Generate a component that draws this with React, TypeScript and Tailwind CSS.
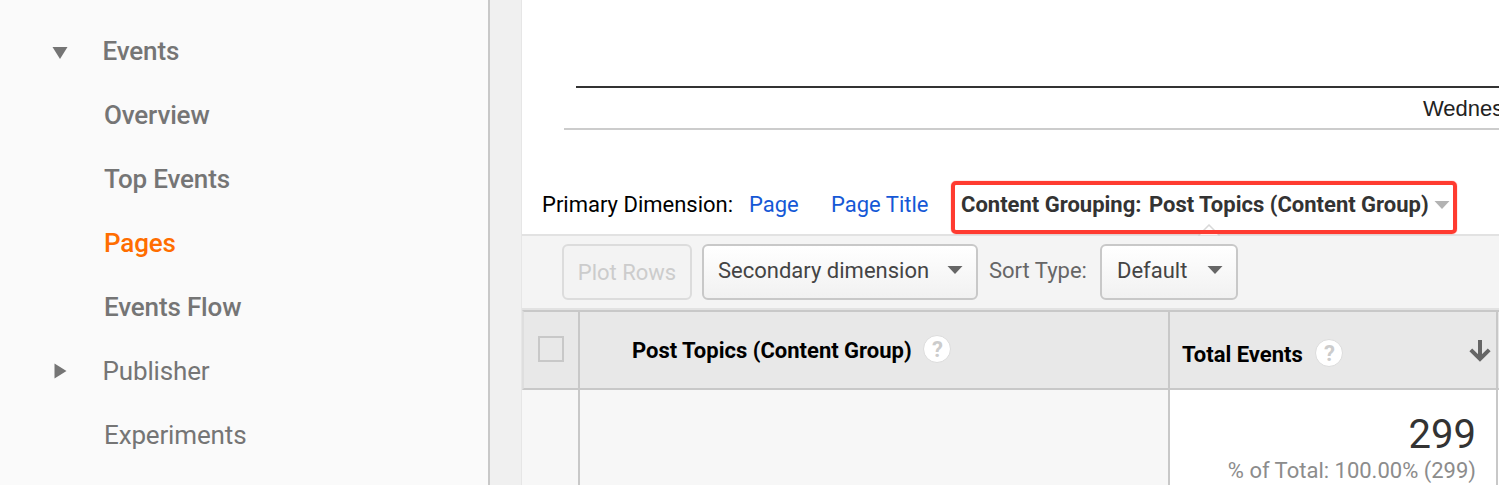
import clsx from "clsx";

interface NavItem {
    label: string;
    arrow?: "down" | "right";
    medium?: boolean;
    active?: boolean;
}

const navItems: NavItem[] = [
    { label: "Events", arrow: "down", medium: true },
    { label: "Overview", medium: true },
    { label: "Top Events", medium: true },
    { label: "Pages", medium: true, active: true },
    { label: "Events Flow", medium: true },
    { label: "Publisher", arrow: "right" },
    { label: "Experiments" },
];

function Sidebar() {
    return (
        <nav className="w-[490px] shrink-0 border-r-2 border-[#c8c8c8] bg-[#fafafa] pt-[19px]">
            {navItems.map((item) => (
                <div key={item.label} className="flex h-16 items-center">
                    <div className={clsx("shrink-0 pl-[52px]", item.arrow ? "w-[102.5px]" : "w-[104px]")}>
                        {item.arrow === "down" && (
                            <svg className="mt-1 h-4 w-4" viewBox="0 0 16 16" fill="#757575">
                                <path d="M0.5 2H15.5L8 14Z" />
                            </svg>
                        )}
                        {item.arrow === "right" && (
                            <svg className="h-4 w-4" viewBox="0 0 16 16" fill="#757575">
                                <path d="M2.5 0.5V15.5L14.5 8Z" />
                            </svg>
                        )}
                    </div>
                    <span
                        className={clsx(
                            "text-[26px] leading-8 tracking-[-0.15px] whitespace-nowrap",
                            item.medium ? "font-medium" : "font-normal",
                            item.active ? "text-[#ff6d00]" : "text-[#757575]"
                        )}
                    >
                        {item.label}
                    </span>
                </div>
            ))}
        </nav>
    );
}

function Caret({ className }: { className?: string }) {
    return (
        <svg className={clsx("h-2 w-4 shrink-0", className)} viewBox="0 0 16 8" fill="currentColor">
            <path d="M0.5 0H15.5L8 8Z" />
        </svg>
    );
}

function Help() {
    return (
        <span className="flex h-7 w-7 shrink-0 items-center justify-center rounded-full border border-[#dcdcdc] bg-white pt-px pl-px text-[22px] leading-none font-bold text-[#cccccc]">
            ?
        </span>
    );
}

function DimensionBar() {
    return (
        <div className="relative flex h-[104px] pt-[61px] pl-5 text-[22px] leading-7 whitespace-nowrap text-black">
            <span className="w-[207px] shrink-0">Primary Dimension:</span>
            <a className="w-[82px] shrink-0 text-[#1558d6]">Page</a>
            <a className="w-[130px] shrink-0 text-[#1558d6]">Page Title</a>
            <span className="w-[188px] shrink-0 font-bold text-[#333]">Content Grouping:</span>
            <span className="w-[285px] shrink-0 font-bold text-[#333]">Post Topics (Content Group)</span>
            <Caret className="mt-[10px] text-[#b3b3b3]" />
            {/* notch pointing at the selected dimension */}
            <svg className="absolute top-[94px] left-[676px] h-3 w-[22px]" viewBox="0 0 22 12">
                <path d="M0 12L11 1L22 12Z" fill="#fff" stroke="#d8d8d8" strokeWidth="1.5" />
            </svg>
            <div className="absolute top-[50.5px] left-[428.5px] h-[53px] w-[506.5px] rounded-[5px] border-4 border-[#ff3b30] shadow-[0_0_1px_#ff3b30]" />
        </div>
    );
}

function Toolbar() {
    return (
        <div className="flex h-[76px] shrink-0 border-t-2 border-b-2 border-[#e2e2e2] bg-[#f4f4f4] pt-2 pl-10 text-[22px] whitespace-nowrap">
            <button className="h-14 w-[130px] rounded-md border-2 border-[#dcdcdc] bg-[#f3f3f3] text-[#cccccc]">
                Plot Rows
            </button>
            <button className="ml-[10px] flex h-14 w-[276px] items-center justify-between rounded-md border-2 border-[#c8c8c8] bg-linear-to-b from-white to-[#f1f1f1] pr-[13px] pb-1 pl-[14px] text-[#444]">
                Secondary dimension
                <Caret className="text-[#666]" />
            </button>
            <span className="w-[122px] pt-[13px] pl-[11px] leading-7 text-[#666]">Sort Type:</span>
            <button className="flex h-14 w-[138px] items-center justify-between rounded-md border-2 border-[#c8c8c8] bg-linear-to-b from-white to-[#f1f1f1] pr-[13px] pb-1 pl-[15px] text-[#444]">
                Default
                <Caret className="text-[#666]" />
            </button>
        </div>
    );
}

function DataTable() {
    return (
        <div className="flex flex-1 flex-col text-[22px] whitespace-nowrap">
            <div className="flex h-20 shrink-0 border-y-2 border-l-2 border-y-[#c8c8c8] border-l-[#dedede] bg-[#e8e8e8] font-bold text-black">
                <div className="w-14 shrink-0 border-r-2 border-[#c8c8c8] pt-6 pl-[14px]">
                    <div className="h-[26px] w-[26px] border-2 border-[#c8c8c8]" />
                </div>
                <div className="flex w-[590px] shrink-0 border-r-2 border-[#c8c8c8] pl-[52px]">
                    <span className="w-[291px] pt-[25px] leading-7">Post Topics (Content Group)</span>
                    <div className="pt-[23px]">
                        <Help />
                    </div>
                </div>
                <div className="flex w-[328px] shrink-0 border-r-2 border-[#c8c8c8] pl-3">
                    <span className="w-[133px] pt-[29px] leading-7">Total Events</span>
                    <div className="pt-[27px]">
                        <Help />
                    </div>
                    <svg className="mt-7 mr-[5px] ml-auto h-[22px] w-[22px]" viewBox="0 0 22 22" fill="none" stroke="#666" strokeWidth="4">
                        <path d="M11 0V19M1.8 9.8L11 19L20.2 9.8" />
                    </svg>
                </div>
            </div>
            <div className="flex flex-1">
                <div className="w-[58px] shrink-0 border-r-2 border-[#c8c8c8] bg-[#f7f7f7]" />
                <div className="w-[590px] shrink-0 border-r-2 border-[#c8c8c8] bg-[#f7f7f7]" />
                <div className="w-[328px] shrink-0 border-r-2 border-[#c8c8c8] bg-white pt-[21px] pr-5 text-right">
                    <div className="text-[40px] leading-[48px] text-[#333]">299</div>
                    <div className="text-[22px] leading-6 text-[#8c8c8c]">% of Total: 100.00% (299)</div>
                </div>
            </div>
        </div>
    );
}

export default function App() {
    return (
        <div className="flex h-[485px] w-[1499px] overflow-hidden bg-[#f0f0f0] font-[Roboto,sans-serif]">
            <Sidebar />
            <main className="ml-[31px] flex w-[978px] shrink-0 flex-col border-l border-[#e6e6e6] bg-white">
                <div className="h-[130px] shrink-0 pt-[86px]">
                    <div className="ml-[54px] h-[42px] border-t-2 border-[#333] pt-[7px] pl-[847px] font-['Liberation_Sans',Arial,sans-serif] text-[22px] leading-7 whitespace-nowrap text-[#222]">
                        Wednesday
                    </div>
                    <div className="ml-[42px] h-0.5 bg-[#ccc]" />
                </div>
                <DimensionBar />
                <Toolbar />
                <DataTable />
            </main>
        </div>
    );
}
